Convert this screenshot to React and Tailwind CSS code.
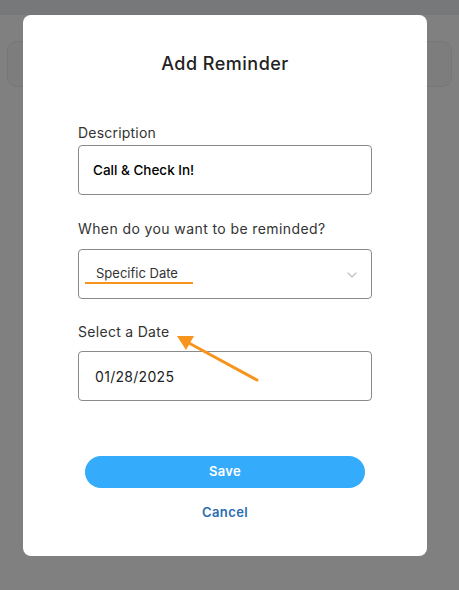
import React from 'react';
import { ChevronDown } from 'lucide-react';

const font = { fontFamily: 'Inter, "Noto Sans", sans-serif' };

export default function App() {
  return (
    <div className="relative h-[590px] w-[459px] overflow-hidden bg-[#808080]" style={font}>
      {/* page behind the overlay */}
      <div className="h-[15px] bg-[#77787a]" />
      <div className="mx-[7px] mt-[26px] h-[46px] rounded-[10px] border border-[#767676] bg-[#7d7d7d]" />

      {/* modal */}
      <div className="absolute left-[23px] top-[15px] flex h-[541px] w-[404px] flex-col rounded-[8px] bg-white px-[55px]">
        <h2 className="mt-[35px] text-center text-[18px] font-medium tracking-[0.5px] text-[#222]">Add Reminder</h2>

        <label className="mt-[46px] text-[14px] leading-[20px] tracking-[0.2px] text-[#333]">Description</label>
        <div className="mt-[2px] flex h-[50px] items-center rounded-[4px] border border-[#8a8a8a] px-[14px] text-[13.5px] font-medium text-black">
          Call &amp; Check In!
        </div>

        <label className="mt-[24px] text-[14px] leading-[20px] tracking-[0.4px] text-[#333]">When do you want to be reminded?</label>
        <div className="relative mt-[10px] flex h-[50px] items-center justify-between rounded-[4px] border border-[#8a8a8a] pl-[17px] pr-[11px] text-[13px] text-[#333]">
          <span>Specific Date</span>
          <ChevronDown size={16} strokeWidth={2} className="mt-[2px] text-[#c4c4c4]" />
          <div className="absolute left-[6px] top-[32px] h-[2px] w-[108px] bg-[#f7941d]" />
        </div>

        <label className="mt-[23px] text-[14px] leading-[20px] tracking-[0.3px] text-[#333]">Select a Date</label>
        <div className="mt-[9px] flex h-[50px] items-center rounded-[4px] border border-[#8a8a8a] px-[16px] text-[14px] tracking-[0.3px] text-[#222]">
          01/28/2025
        </div>

        <button className="mx-[7px] mt-[55px] h-[32px] rounded-full bg-[#35abfc] text-[13px] font-semibold tracking-[0.3px] text-white">
          Save
        </button>
        <button className="mt-[15px] text-[13px] font-semibold tracking-[0.4px] text-[#2a6db0]">Cancel</button>
      </div>

      {/* annotation arrow */}
      <svg className="absolute left-0 top-0" width="459" height="590" viewBox="0 0 459 590">
        <line x1="257" y1="380" x2="187" y2="342" stroke="#f7941d" strokeWidth="3" strokeLinecap="round" />
        <polygon points="177,336 194,336 186,350" fill="#f7941d" />
      </svg>
    </div>
  );
}
